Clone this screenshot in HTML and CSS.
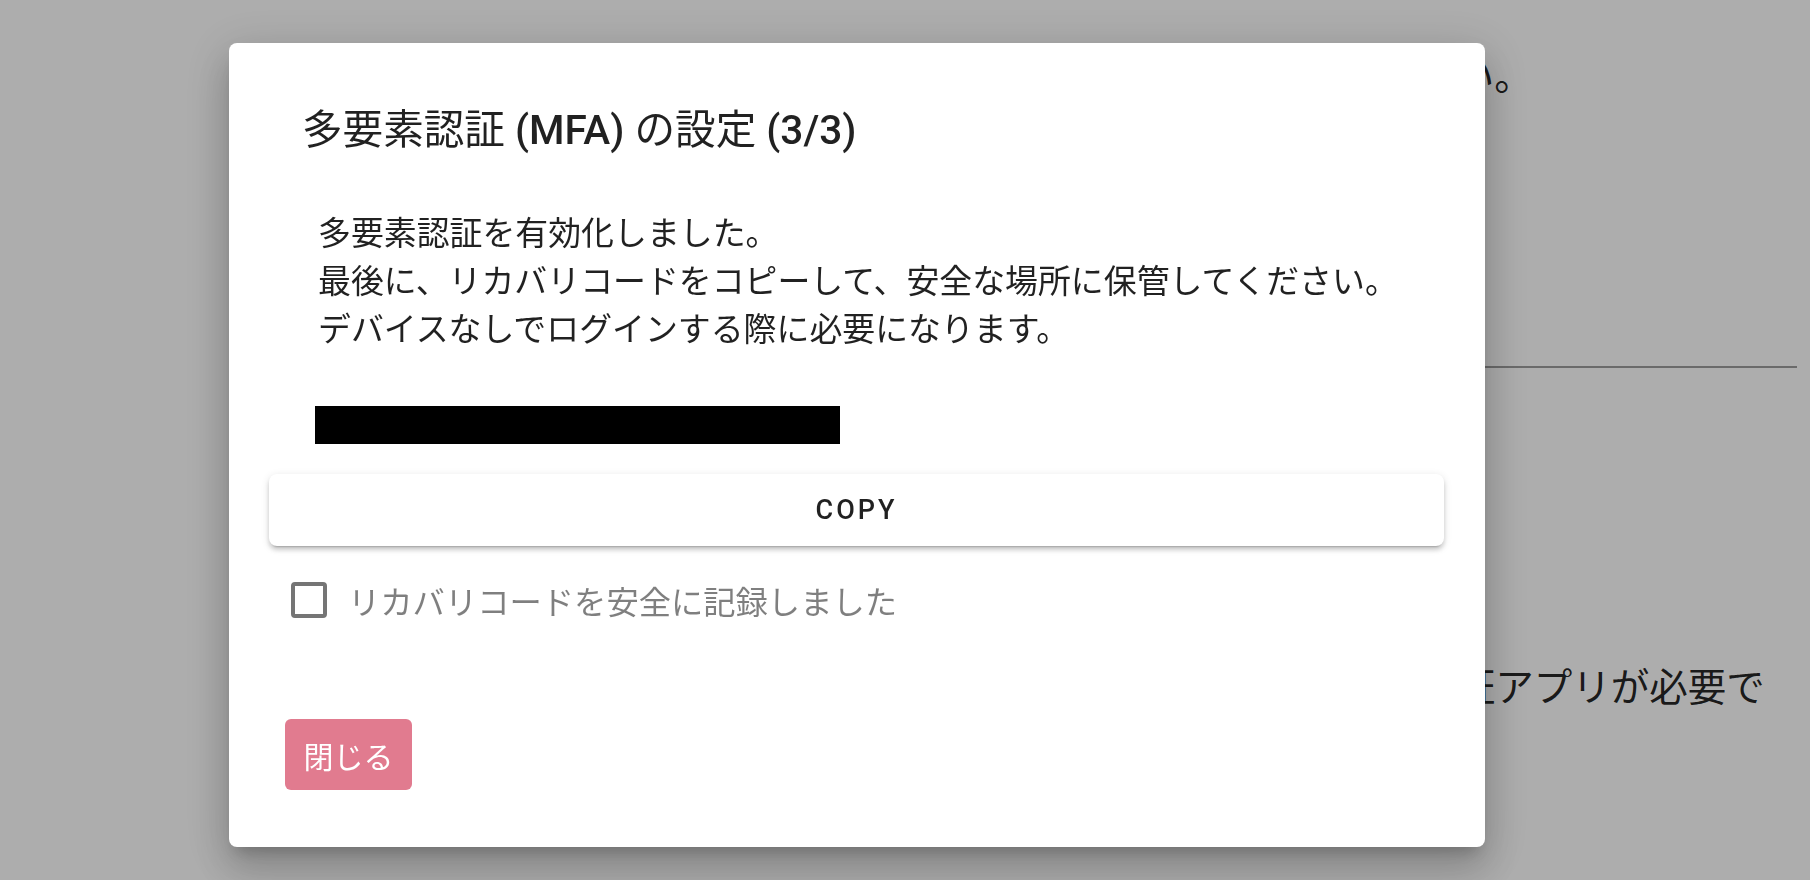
FILE: index.html
```html
<!DOCTYPE html>
<html lang="ja">
<head>
<meta charset="UTF-8">
<title>多要素認証 (MFA) の設定</title>
<link rel="stylesheet" href="styles.css">
</head>
<body>

<!-- 背景のページ -->
<div class="page">
	<p class="lead">ログイン時に追加の認証を行う設定をしてください。</p>
	<div class="field"></div>
	<p class="note">多要素認証の設定には、スマートフォンなどの認証アプリが必要です。</p>
</div>

<!-- ダイアログ -->
<div class="overlay">
	<div class="dialog">
		<h2 class="title">多要素認証 <span class="latin">(MFA)</span> の設定 <span class="latin">(3/3)</span></h2>

		<div class="message">
			多要素認証を有効化しました。<br>
			最後に、リカバリコードをコピーして、安全な場所に保管してください。<br>
			デバイスなしでログインする際に必要になります。
		</div>

		<div class="code"></div>

		<button type="button" class="btn-copy">COPY</button>

		<label class="confirm">
			<span class="box"></span>
			<span class="confirm-text">リカバリコードを安全に記録しました</span>
		</label>

		<div class="actions">
			<button type="button" class="btn-close">閉じる</button>
		</div>
	</div>
</div>

</body>
</html>
```

FILE: styles.css
```css
* {box-sizing: border-box;}
body {margin: 0; font-family: Roboto, "Noto Sans CJK JP", sans-serif; color: rgba(0, 0, 0, 0.87); background: #fff;}

/* 背景のページ */
.page {padding: 48px 13px 0 611px; font-size: 38.5px;}
.page p {margin: 0; line-height: 57px;}
.field {margin-top: 201px; height: 62px; border-bottom: 2px solid #9d9d9d;}
.note {margin-top: 291px !important;}

/* ダイアログ */
.overlay {position: fixed; inset: 0; background: rgba(0, 0, 0, 0.32); display: flex; align-items: flex-start; padding: 43px 0 0 229px;}
.dialog {width: 1256px; height: 804px; background: #fff; border-radius: 8px; padding: 55px 41px 57px 40px;
	box-shadow: 0 11px 15px -7px rgba(0,0,0,0.2), 0 24px 38px 3px rgba(0,0,0,0.14), 0 9px 46px 8px rgba(0,0,0,0.12);}

.title {margin: 0; padding-left: 33px; font-size: 40.6px; line-height: 64px; font-weight: 400;}
.title .latin {font-weight: 500;}

.message {margin-top: 48px; padding-left: 49px; font-size: 32.9px; line-height: 48px;}

.code {margin: 52px 0 0 46px; width: 525px; height: 38px; background: #000;}

.btn-copy {display: block; width: 100%; height: 72px; margin-top: 30px; border: 0; border-radius: 8px; background: #fff;
	font-family: Roboto, sans-serif; font-size: 27px; font-weight: 500; letter-spacing: 3px; color: rgba(0, 0, 0, 0.87);
	box-shadow: 0 5px 2px -4px rgba(0,0,0,0.2), 0 4px 4px 0 rgba(0,0,0,0.14), 0 2px 9px 0 rgba(0,0,0,0.12);}

.confirm {display: flex; align-items: center; gap: 21px; height: 76px; margin-top: 16px; padding-left: 22px;}
.box {width: 36px; height: 36px; border: 4px solid #757575; border-radius: 4px;}
.confirm-text {font-size: 32.3px; color: rgba(0, 0, 0, 0.5);}

.actions {margin-top: 81px; padding-left: 16px;}
.btn-close {width: 127px; height: 71px; border: 0; border-radius: 6px; background: #e17b8f; color: #fff;
	font-family: "Noto Sans CJK JP", sans-serif; font-size: 30px; padding: 0;}
```
